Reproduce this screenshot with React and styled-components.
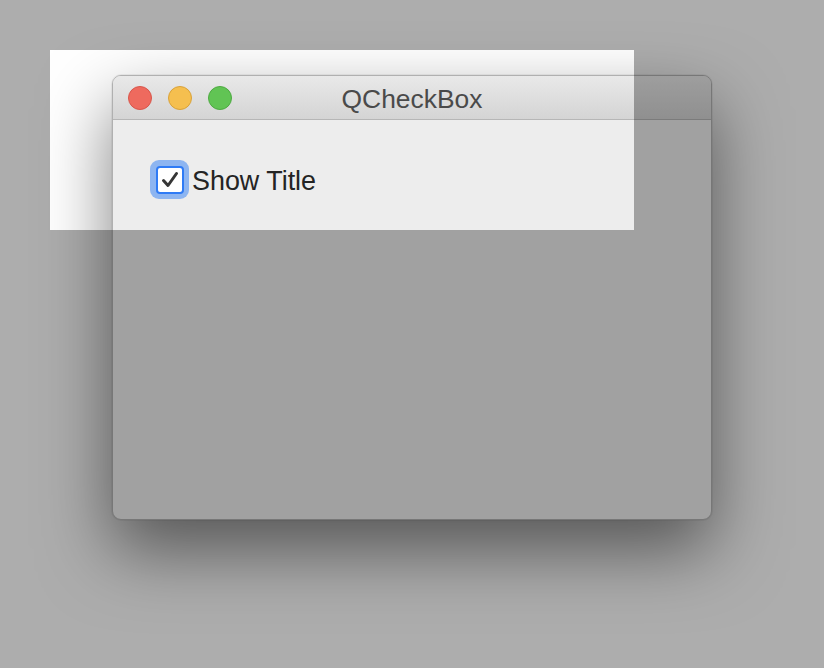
import React from 'react';
import styled, { createGlobalStyle } from 'styled-components';

const GlobalStyle = createGlobalStyle`
  html, body {
    margin: 0;
    padding: 0;
    background: #ffffff;
    font-family: "Liberation Sans", Arial, sans-serif;
  }
`;

const Desktop = styled.div`
  position: relative;
  width: 824px;
  height: 668px;
  overflow: hidden;
  background: #ffffff;
`;

const Window = styled.div`
  position: absolute;
  left: 112px;
  top: 75px;
  width: 600px;
  height: 445px;
  box-sizing: border-box;
  display: flex;
  flex-direction: column;
  border-radius: 9px;
  border: 1px solid #b0b0b0;
  background: #ededed;
  overflow: hidden;
  box-shadow: 0 30px 70px rgba(0, 0, 0, 0.5), 0 0 0 1px rgba(0, 0, 0, 0.05);
`;

const TitleBar = styled.div`
  position: relative;
  height: 43px;
  flex: none;
  display: flex;
  align-items: center;
  gap: 16px;
  padding-left: 15px;
  background: linear-gradient(#e9e9e9, #d4d4d4);
  border-bottom: 1px solid #b6b6b6;
`;

const Light = styled.span`
  width: 22px;
  height: 22px;
  border-radius: 50%;
  background: ${p => p.color};
  border: 1px solid ${p => p.edge};
`;

const Title = styled.div`
  position: absolute;
  left: 0;
  right: 0;
  top: 8px;
  text-align: center;
  font-size: 26.4px;
  line-height: 30px;
  color: #4a4a4a;
  pointer-events: none;
`;

const Body = styled.div`
  flex: 1;
  padding: 40px 0 0 38px;
`;

const CheckRow = styled.label`
  display: flex;
  align-items: center;
  gap: 3px;
  font-size: 26.9px;
  color: #242424;
`;

const Caption = styled.span`
  padding-top: 3px;
`;

const FocusRing = styled.span`
  width: 39px;
  height: 39px;
  margin-left: -1px;
  box-sizing: border-box;
  border-radius: 9px;
  background: #8db5f1;
  display: flex;
  align-items: center;
  justify-content: center;
`;

const Box = styled.span`
  width: 28px;
  height: 28px;
  box-sizing: border-box;
  border-radius: 4px;
  border: 2px solid #2f7bf5;
  background: #ffffff;
  display: flex;
  align-items: center;
  justify-content: center;
`;

// screenshot selection: dims everything outside the picked rectangle
const Selection = styled.div`
  position: absolute;
  left: 50px;
  top: 50px;
  width: 584px;
  height: 180px;
  box-shadow: 0 0 0 1200px rgba(0, 0, 0, 0.32);
  pointer-events: none;
`;

export default function App() {
  return (
    <Desktop>
      <GlobalStyle />
      <Window>
        <TitleBar>
          <Light color="#ee6a5e" edge="#d8564b" />
          <Light color="#f5bf4f" edge="#d9a23a" />
          <Light color="#61c454" edge="#4eaa42" />
          <Title>QCheckBox</Title>
        </TitleBar>
        <Body>
          <CheckRow>
            <FocusRing>
              <Box>
                <svg width="20" height="20" viewBox="0 0 20 20">
                  <path d="M3.5 10.5 L8 15.5 L16.5 3.5" fill="none" stroke="#363636" strokeWidth="3" strokeLinecap="round" strokeLinejoin="round" />
                </svg>
              </Box>
            </FocusRing>
            <Caption>Show Title</Caption>
          </CheckRow>
        </Body>
      </Window>
      <Selection />
    </Desktop>
  );
}
